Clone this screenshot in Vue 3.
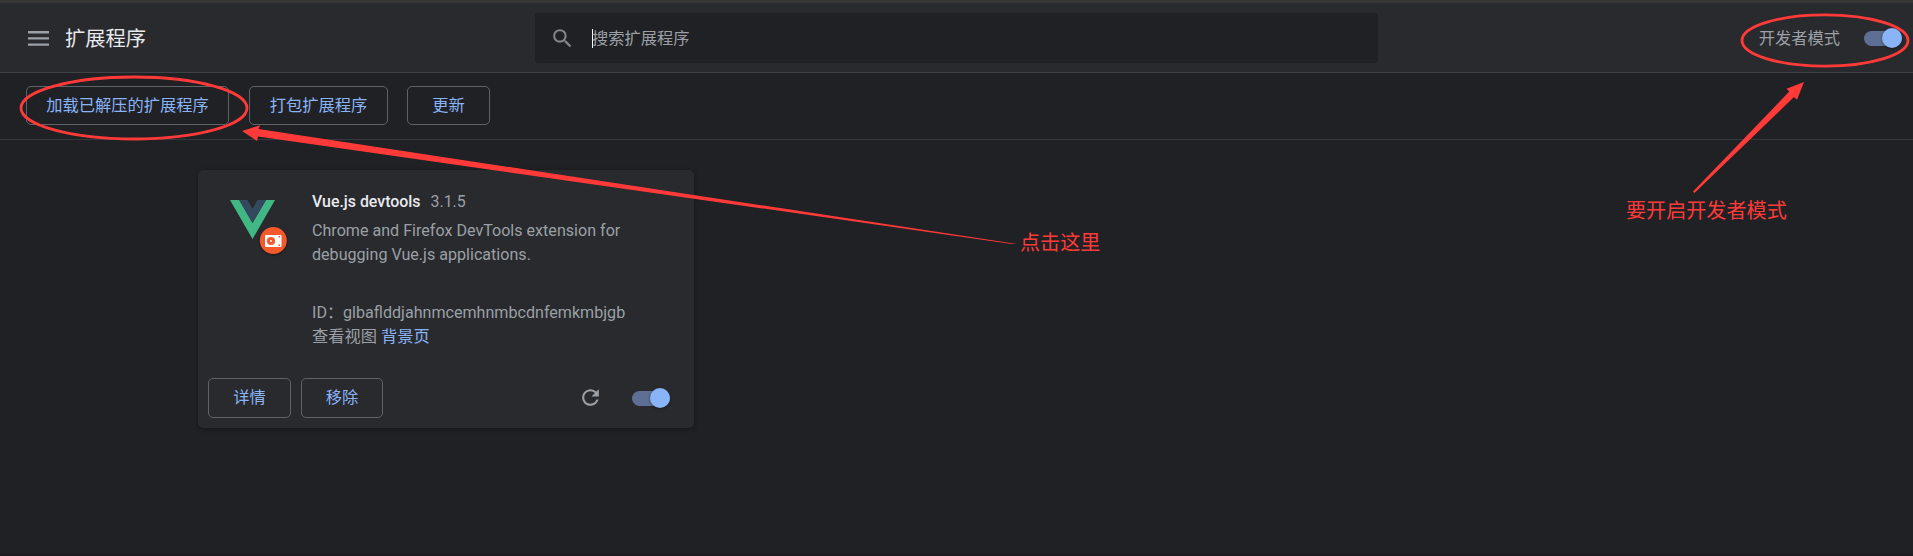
<script setup>
const tools = [
  { label: '加载已解压的扩展程序', cls: 'load' },
  { label: '打包扩展程序', cls: 'pack' },
  { label: '更新', cls: 'update' },
]
</script>

<template>
  <div class="page">
    <header class="header">
      <div class="brand">
        <svg class="menu" width="21" height="15" viewBox="0 0 21 15">
          <path d="M0 0h21v2.4H0zM0 6.2h21v2.4H0zM0 12.4h21v2.4H0z" fill="#9aa0a6" />
        </svg>
        <h1>扩展程序</h1>
      </div>
      <div class="search">
        <svg class="glass" width="25" height="25" viewBox="0 0 24 24">
          <path fill="#80868b" d="M15.5 14h-.79l-.28-.27A6.471 6.471 0 0 0 16 9.5 6.5 6.5 0 1 0 9.5 16c1.61 0 3.09-.59 4.23-1.57l.27.28v.79l5 4.99L20.49 19l-4.99-5zm-6 0C7.01 14 5 11.99 5 9.5S7.01 5 9.5 5 14 7.01 14 9.5 11.99 14 9.5 14z" />
        </svg>
        <i class="caret"></i>
        <span class="placeholder">搜索扩展程序</span>
      </div>
      <div class="dev">
        <span>开发者模式</span>
        <i class="toggle"></i>
      </div>
    </header>

    <nav class="toolbar">
      <button v-for="t in tools" :key="t.cls" :class="t.cls">{{ t.label }}</button>
    </nav>

    <main class="content">
      <article class="card">
        <div class="info">
          <svg class="logo" width="60" height="60" viewBox="0 0 60 60">
            <path d="M2 2h9.2L24.500 25 38 2h9L24.500 41z" fill="#41b883" />
            <path d="M11.200 2h8.300l5 8.800L29.500 2H38L24.500 25z" fill="#35495e" />
            <circle class="badge" cx="45.300" cy="42.500" r="13.500" fill="#f4592b" />
            <rect x="37" y="37" width="16.500" height="12" rx="1" fill="#fff" />
            <circle cx="43" cy="43" r="4.100" fill="#f4592b" />
            <circle cx="43" cy="43" r="1" fill="#fff" />
            <path d="M50.500 38h1.500v1.500h-1.500zM50.500 46.500h1.500V48h-1.500z" fill="#f4592b" />
          </svg>
          <div class="text">
            <div class="title"><b>Vue.js devtools</b><span>3.1.5</span></div>
            <p class="desc">Chrome and Firefox DevTools extension for<br>debugging Vue.js applications.</p>
            <div class="line id">ID：glbaflddjahnmcemhnmbcdnfemkmbjgb</div>
            <div class="line">查看视图 <a>背景页</a></div>
          </div>
        </div>
        <div class="actions">
          <button class="details">详情</button>
          <button class="remove">移除</button>
          <svg class="reload" width="25" height="25" viewBox="0 0 24 24">
            <path fill="#9aa0a6" d="M17.650 6.350C16.200 4.900 14.210 4 12 4c-4.420 0-7.990 3.580-7.990 8s3.570 8 7.990 8c3.730 0 6.840-2.550 7.730-6h-2.080c-.82 2.330-3.040 4-5.650 4-3.310 0-6-2.690-6-6s2.690-6 6-6c1.660 0 3.140.69 4.220 1.780L13 11h7V4l-2.350 2.350z" />
          </svg>
          <i class="toggle"></i>
        </div>
      </article>
    </main>

    <svg class="marks" width="1913" height="556" viewBox="0 0 1913 556">
      <g fill="none" stroke="#ff3a38" stroke-width="2.800">
        <ellipse cx="134" cy="108" rx="113" ry="31" />
        <ellipse cx="1825" cy="40.500" rx="83" ry="25.600" />
      </g>
      <g fill="#ff3a38">
        <path d="M242 131L260 125.200 258.500 129 1017 244 1010 243.700 258 136.500 257 141z" />
        <path d="M1804 82L1786.500 88.700 1789.300 91.500 1693 191.500 1694.500 193 1794 97 1797 99.800z" />
      </g>
    </svg>
    <span class="note click">点击这里</span>
    <span class="note enable">要开启开发者模式</span>
  </div>
</template>

<style>
body {
  margin: 0;
  background: #202124;
}
</style>

<style scoped>
.page {
  position: relative;
  box-sizing: border-box;
  width: 1913px;
  height: 556px;
  overflow: hidden;
  background: #202124;
  border-bottom: 2px solid #1c1b1f;
  color: #9aa0a6;
  font: 16.25px/24px Roboto, "Noto Sans CJK SC", sans-serif;
}
.header {
  box-sizing: border-box;
  height: 73px;
  display: flex;
  align-items: flex-start;
  background: #292a2d;
  border-top: 3px solid #373734;
  border-bottom: 1px solid #414246;
}
.brand {
  box-sizing: border-box;
  width: 535px;
  height: 70px;
  padding: 1px 0 0 28px;
  display: flex;
  align-items: center;
}
h1 {
  margin: 1px 0 0 16px;
  font-size: 20.3px;
  font-weight: 400;
  line-height: 30px;
  color: #e8eaed;
}
.search {
  box-sizing: border-box;
  width: 843px;
  height: 50px;
  margin-top: 10px;
  padding-left: 15px;
  display: flex;
  align-items: center;
  border-radius: 3px;
  background: #202124;
}
.glass {
  margin-right: 17px;
}
.caret {
  width: 1px;
  height: 19px;
  margin-right: -1px;
  background: #fff;
}
.placeholder {
  padding-top: 1px;
}
.dev {
  box-sizing: border-box;
  flex: 1;
  height: 70px;
  padding: 1px 11px 0 0;
  display: flex;
  align-items: center;
  justify-content: flex-end;
  gap: 24px;
}
.toggle {
  position: relative;
  width: 38px;
  height: 15px;
  border-radius: 8px;
  background: #5d6f94;
}
.toggle::after {
  content: "";
  position: absolute;
  top: -3px;
  right: 0;
  width: 20px;
  height: 20px;
  border-radius: 50%;
  background: #8ab4f8;
  box-shadow: 0 1px 3px rgba(0, 0, 0, 0.4);
}
.toolbar {
  box-sizing: border-box;
  height: 67px;
  padding: 13px 26px;
  display: flex;
  border-bottom: 1px solid #37383b;
}
button {
  box-sizing: border-box;
  height: 39px;
  padding: 0;
  border: 1px solid #5f6368;
  border-radius: 5px;
  background: transparent;
  color: #8ab4f8;
  font: inherit;
}
.load {
  width: 203px;
  margin-right: 20px;
}
.pack {
  width: 139px;
  margin-right: 19px;
}
.update {
  width: 83px;
}
.content {
  padding: 30px 198px;
}
.card {
  box-sizing: border-box;
  width: 496px;
  height: 258px;
  display: flex;
  flex-direction: column;
  justify-content: space-between;
  border-radius: 5px;
  background: #292a2d;
  box-shadow: 0 1px 4px rgba(0, 0, 0, 0.4);
}
.info {
  display: flex;
  padding: 20px 0 0 30px;
}
.logo {
  margin: 8px 24px 0 0;
}
.badge {
  filter: drop-shadow(0 1px 1px rgba(0, 0, 0, 0.5));
}
.title {
  display: flex;
  gap: 10px;
  font-size: 15.9px;
}
b {
  font-weight: 500;
  color: #e8eaed;
}
.desc {
  margin: 5px 0 34px;
  font-size: 16.1px;
}
.line {
  height: 24px;
  white-space: nowrap;
}
.id {
  font-size: 16.1px;
}
a {
  color: #8ab4f8;
}
.actions {
  display: flex;
  align-items: center;
  padding: 0 24px 10px 10px;
}
.actions button {
  height: 40px;
}
.details {
  width: 83px;
  margin-right: 10px;
}
.remove {
  width: 82px;
}
.reload {
  margin: 0 29px 1px auto;
}
.marks {
  position: absolute;
  top: 0;
  left: 0;
}
.note {
  position: absolute;
  font-size: 20.1px;
  line-height: 30px;
  color: #ff3a38;
  white-space: nowrap;
}
.click {
  left: 1020px;
  top: 228px;
}
.enable {
  left: 1626px;
  top: 196px;
}
</style>
